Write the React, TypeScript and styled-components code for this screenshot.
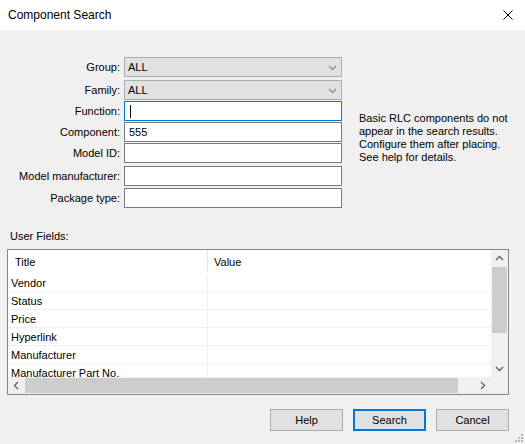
import React from 'react';
import styled, { createGlobalStyle } from 'styled-components';

const GlobalStyle = createGlobalStyle`
  html, body {
    margin: 0;
    padding: 0;
    background: #f0f0f0;
  }
  * {
    box-sizing: border-box;
  }
`;

const Window = styled.div`
  position: relative;
  width: 525px;
  height: 444px;
  background: #f0f0f0;
  font-family: 'Liberation Sans', Arial, sans-serif;
  font-size: 11px;
  color: #000;
  overflow: hidden;
  display: flex;
  flex-direction: column;
`;

const TitleBar = styled.div`
  flex: none;
  height: 30px;
  background: #fff;
  display: flex;
  align-items: center;
  justify-content: space-between;
  padding: 0 12px 0 8px;
  font-size: 12px;
`;

const Body = styled.div`
  padding-top: 27px;
  display: flex;
  flex-direction: column;
`;

const Form = styled.div`
  display: flex;
`;

const Fields = styled.div`
  display: flex;
  flex-direction: column;
  padding-left: 7px;
`;

const FieldRow = styled.div<{ $gap: number }>`
  display: grid;
  grid-template-columns: 113px 218px;
  column-gap: 4px;
  align-items: center;
  height: 20px;
  margin-top: ${(p) => p.$gap}px;
`;

const Label = styled.label`
  text-align: right;
  white-space: nowrap;
`;

const Combo = styled.div`
  height: 20px;
  border: 1px solid #adadad;
  background: #e1e1e1;
  display: flex;
  align-items: center;
  justify-content: space-between;
  padding: 0 4px 0 3px;
`;

const TextBox = styled.div<{ $focused?: boolean }>`
  height: 20px;
  border: 1px solid ${(p) => (p.$focused ? '#0078d7' : '#7a7a7a')};
  background: #fff;
  display: flex;
  align-items: center;
  padding-left: 4px;
`;

const Caret = styled.span`
  display: block;
  width: 1px;
  height: 13px;
  margin-left: 1px;
  background: #000;
`;

const Note = styled.div`
  margin-left: 17px;
  padding-top: 55px;
  line-height: 13px;
  white-space: nowrap;
`;

const SectionLabel = styled.div`
  margin-top: 22px;
  padding-left: 10px;
  line-height: 13px;
`;

const Table = styled.div`
  margin: 6px 0 0 7px;
  width: 502px;
  height: 146px;
  border: 1px solid #828790;
  background: #fff;
  display: grid;
  grid-template-columns: 1fr 17px;
  grid-template-rows: 1fr 17px;
`;

const Viewport = styled.div`
  overflow: hidden;
`;

const HeaderRow = styled.div`
  display: grid;
  grid-template-columns: 200px 1fr;
  height: 24px;
`;

const HeaderCell = styled.div<{ $first?: boolean }>`
  padding: 6px 0 0 ${(p) => (p.$first ? 7 : 6)}px;
  line-height: 13px;
  border-right: ${(p) => (p.$first ? '1px solid #e5e5e5' : 'none')};
  margin-bottom: ${(p) => (p.$first ? 2 : 0)}px;
`;

const DataRow = styled.div`
  display: grid;
  grid-template-columns: 200px 1fr;
  height: 18px;
  border-bottom: 1px solid #f0f0f0;
`;

const Cell = styled.div<{ $first?: boolean }>`
  display: flex;
  align-items: center;
  padding-left: 3px;
  white-space: nowrap;
  border-right: ${(p) => (p.$first ? '1px solid #f0f0f0' : 'none')};
`;

const ScrollBar = styled.div<{ $vertical?: boolean }>`
  background: #f0f0f0;
  display: flex;
  flex-direction: ${(p) => (p.$vertical ? 'column' : 'row')};
`;

const ArrowButton = styled.div`
  flex: none;
  width: 17px;
  height: 17px;
  display: flex;
  align-items: center;
  justify-content: center;
`;

const Thumb = styled.div<{ $vertical?: boolean }>`
  flex: none;
  background: #cdcdcd;
  ${(p) =>
    p.$vertical
      ? 'width: 15px; height: 66px; margin: 0 1px;'
      : 'height: 15px; width: 433px; margin: 1px 0;'}
`;

const Spacer = styled.div`
  flex: 1;
`;

const Corner = styled.div`
  background: #f0f0f0;
`;

const ButtonRow = styled.div`
  display: flex;
  justify-content: flex-end;
  gap: 10px;
  margin-top: 14px;
  padding-right: 16px;
`;

const Button = styled.button<{ $default?: boolean }>`
  width: 73px;
  height: 22px;
  border: 1px solid ${(p) => (p.$default ? '#0078d7' : '#adadad')};
  box-shadow: ${(p) => (p.$default ? 'inset 0 0 0 1px #0078d7' : 'none')};
  background: #e1e1e1;
  font-family: 'Liberation Sans', Arial, sans-serif;
  font-size: 11px;
  color: #000;
  padding: 0;
`;

const Grip = styled.svg`
  position: absolute;
  right: 2px;
  bottom: 2px;
`;

const Chevron = ({ dir, color = '#606060' }: { dir: 'up' | 'down' | 'left' | 'right'; color?: string }) => {
  const points = {
    up: '1,6 4.5,2.5 8,6',
    down: '1,3 4.5,6.5 8,3',
    left: '6,1 2.5,4.5 6,8',
    right: '3,1 6.5,4.5 3,8',
  }[dir];
  return (
    <svg width="9" height="9" viewBox="0 0 9 9">
      <polyline points={points} fill="none" stroke={color} strokeWidth="1.3" />
    </svg>
  );
};

const fields = [
  { label: 'Function:', gap: 1, focused: true },
  { label: 'Component:', gap: 1, value: '555' },
  { label: 'Model ID:', gap: 1 },
  { label: 'Model manufacturer:', gap: 3 },
  { label: 'Package type:', gap: 2 },
];

const userFields = ['Vendor', 'Status', 'Price', 'Hyperlink', 'Manufacturer', 'Manufacturer Part No.'];

const App = () => {
  return (
    <Window>
      <GlobalStyle />
      <TitleBar>
        <span>Component Search</span>
        <svg width="10" height="10" viewBox="0 0 10 10">
          <path d="M0.5 0.5 L9.5 9.5 M9.5 0.5 L0.5 9.5" stroke="#000" strokeWidth="1" />
        </svg>
      </TitleBar>
      <Body>
        <Form>
          <Fields>
            <FieldRow $gap={0}>
              <Label>Group:</Label>
              <Combo>
                <span>ALL</span>
                <Chevron dir="down" color="#8a8a8a" />
              </Combo>
            </FieldRow>
            <FieldRow $gap={3}>
              <Label>Family:</Label>
              <Combo>
                <span>ALL</span>
                <Chevron dir="down" color="#8a8a8a" />
              </Combo>
            </FieldRow>
            {fields.map((f) => (
              <FieldRow key={f.label} $gap={f.gap}>
                <Label>{f.label}</Label>
                <TextBox $focused={f.focused}>
                  {f.focused ? <Caret /> : f.value}
                </TextBox>
              </FieldRow>
            ))}
          </Fields>
          <Note>
            Basic RLC components do not
            <br />
            appear in the search results.
            <br />
            Configure them after placing.
            <br />
            See help for details.
          </Note>
        </Form>
        <SectionLabel>User Fields:</SectionLabel>
        <Table>
          <Viewport>
            <HeaderRow>
              <HeaderCell $first>Title</HeaderCell>
              <HeaderCell>Value</HeaderCell>
            </HeaderRow>
            {userFields.map((name) => (
              <DataRow key={name}>
                <Cell $first>{name}</Cell>
                <Cell />
              </DataRow>
            ))}
          </Viewport>
          <ScrollBar $vertical>
            <ArrowButton>
              <Chevron dir="up" />
            </ArrowButton>
            <Thumb $vertical />
            <Spacer />
            <ArrowButton>
              <Chevron dir="down" />
            </ArrowButton>
          </ScrollBar>
          <ScrollBar>
            <ArrowButton>
              <Chevron dir="left" />
            </ArrowButton>
            <Thumb />
            <Spacer />
            <ArrowButton>
              <Chevron dir="right" />
            </ArrowButton>
          </ScrollBar>
          <Corner />
        </Table>
        <ButtonRow>
          <Button>Help</Button>
          <Button $default>Search</Button>
          <Button>Cancel</Button>
        </ButtonRow>
      </Body>
      <Grip width="10" height="10" viewBox="0 0 10 10">
        <rect x="8" y="2" width="2" height="2" fill="#b8b8b8" />
        <rect x="5" y="5" width="2" height="2" fill="#b8b8b8" />
        <rect x="8" y="5" width="2" height="2" fill="#b8b8b8" />
        <rect x="2" y="8" width="2" height="2" fill="#b8b8b8" />
        <rect x="5" y="8" width="2" height="2" fill="#b8b8b8" />
        <rect x="8" y="8" width="2" height="2" fill="#b8b8b8" />
      </Grip>
    </Window>
  );
};

export default App;
